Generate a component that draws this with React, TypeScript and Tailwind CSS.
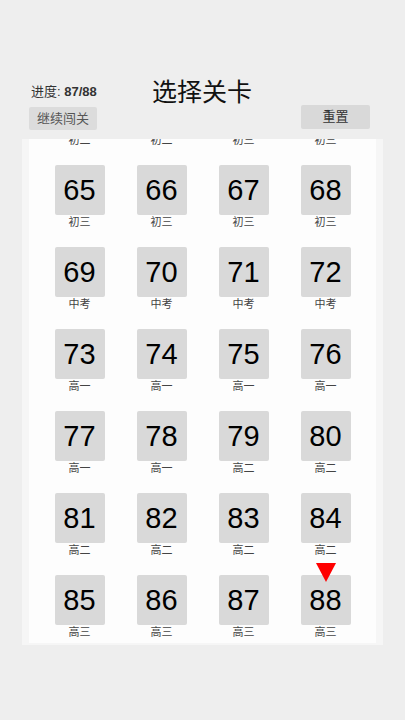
import { useLayoutEffect, useRef } from "react";

const gradeOf = (n: number) => {
  if (n <= 30) return "初一";
  if (n <= 62) return "初二";
  if (n <= 68) return "初三";
  if (n <= 72) return "中考";
  if (n <= 78) return "高一";
  if (n <= 84) return "高二";
  return "高三";
};

const levels = Array.from({ length: 88 }, (_, i) => i + 1);

const LevelCell = ({ n, current }: { n: number; current: boolean }) => (
  <div className="flex flex-col items-center">
    <div className="relative w-[50px] h-[50px] rounded-[2px] bg-[#d9d9d9] flex items-center justify-center text-[29px] leading-none text-black">
      {current && (
        <div className="absolute left-1/2 -translate-x-1/2 -top-[12px] w-0 h-0 border-l-[10px] border-r-[10px] border-t-[19px] border-l-transparent border-r-transparent border-t-[#ff0000]" />
      )}
      {n}
    </div>
    <div className="text-[11px] leading-[12px] text-[#444444] mt-[1px]">{gradeOf(n)}</div>
  </div>
);

export default function App() {
  const listRef = useRef<HTMLDivElement>(null);

  useLayoutEffect(() => {
    if (listRef.current) listRef.current.scrollTop = listRef.current.scrollHeight;
  }, []);

  return (
    <div
      className="w-[405px] h-[720px] bg-[#eeeeee] flex flex-col"
      style={{ fontFamily: '"Liberation Sans", "Noto Sans CJK SC", sans-serif' }}
    >
      {/* header */}
      <div className="flex items-start pt-[76px] pl-[29px] pr-[35px] h-[139px]">
        <div className="flex flex-col w-[68px]">
          <div className="text-[13px] leading-[16px] text-[#333] pl-[2px] pt-[8px] whitespace-nowrap">
            进度: <span className="font-bold">87/88</span>
          </div>
          <button className="mt-[7px] w-[68px] h-[23px] bg-[#dcdcdc] rounded-[2px] text-[13px] text-[#555]">
            继续闯关
          </button>
        </div>
        <div className="flex-1 text-center text-[25px] leading-[32px] text-[#111] pl-[6px]">选择关卡</div>
        <button className="mt-[29px] w-[69px] h-[24px] bg-[#d9d9d9] rounded-[2px] text-[13px] text-[#333]">
          重置
        </button>
      </div>

      {/* level panel, scrolled to the end */}
      <div className="mx-[22px] bg-[#f6f6f6] px-[7px] pb-[2px]">
        <div ref={listRef} className="h-[504px] overflow-hidden bg-[#fdfdfd]">
          <div className="grid grid-cols-[repeat(4,82px)] justify-center gap-y-[19px] pt-[12px] pb-[5px]">
            {levels.map((n) => (
              <LevelCell key={n} n={n} current={n === 88} />
            ))}
          </div>
        </div>
      </div>
    </div>
  );
}
